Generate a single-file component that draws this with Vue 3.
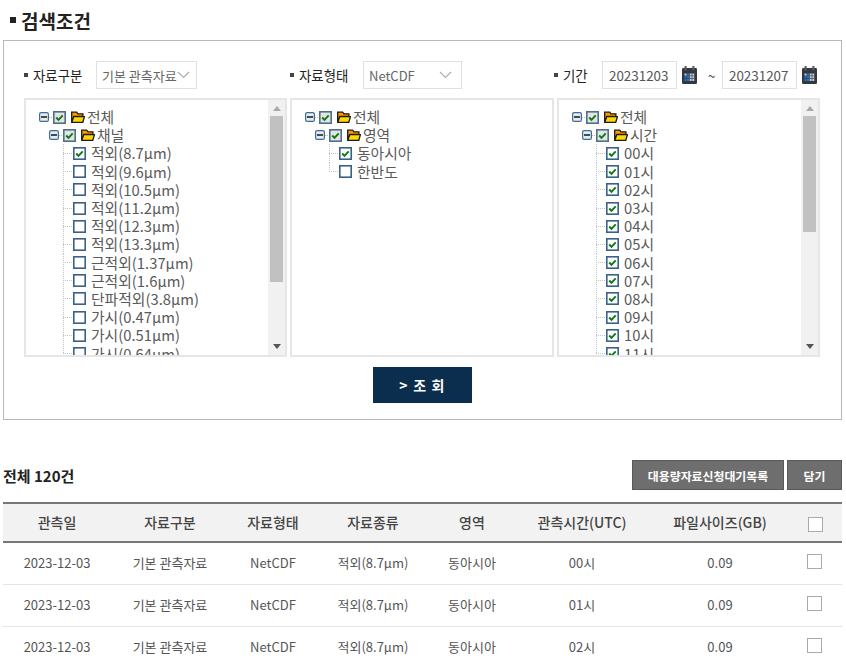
<script setup>
const channels = ['적외(8.7μm)','적외(9.6μm)','적외(10.5μm)','적외(11.2μm)','적외(12.3μm)','적외(13.3μm)','근적외(1.37μm)','근적외(1.6μm)','단파적외(3.8μm)','가시(0.47μm)','가시(0.51μm)','가시(0.64μm)']
const hours = Array.from({ length: 12 }, (_, i) => String(i).padStart(2, '0') + '시')
const panels = [
  { branch: '채널', scroll: 166, leaves: channels.map((t, i) => ({ t, on: i === 0 })) },
  { branch: '영역', scroll: 0, leaves: [{ t: '동아시아', on: true }, { t: '한반도', on: false }] },
  { branch: '시간', scroll: 116, leaves: hours.map(t => ({ t, on: true })) }
]
const columns = ['관측일','자료구분','자료형태','자료종류','영역','관측시간(UTC)','파일사이즈(GB)']
const widths = [108,118,88,112,86,134,142,51]
const rows = ['00시','01시','02시']
const calCells = []
for (let r = 0; r < 3; r++) for (let c = 0; c < 4; c++) {
  calCells.push({ x: 2.5 + c * 2.6, y: 7.5 + r * 2.7, blue: (c < 2 && r > 0) || (c === 1 && r === 0) })
}
</script>

<template>
  <div class="page">
    <h2 class="title"><i class="sq"></i>검색조건</h2>

    <section class="box">
      <div class="filters">
        <div class="field">
          <i class="dot"></i><span class="lab lab1">자료구분</span>
          <div class="select s1">기본 관측자료
            <svg class="chev" width="13" height="8" viewBox="0 0 13 8"><path d="M1 1l5.5 5.5L12 1" fill="none" stroke="#aaa" stroke-width="1.1"/></svg>
          </div>
        </div>
        <div class="field">
          <i class="dot"></i><span class="lab lab2">자료형태</span>
          <div class="select s2">NetCDF
            <svg class="chev" width="13" height="8" viewBox="0 0 13 8"><path d="M1 1l5.5 5.5L12 1" fill="none" stroke="#aaa" stroke-width="1.1"/></svg>
          </div>
        </div>
        <div class="field">
          <i class="dot"></i><span class="lab lab3">기간</span>
          <input class="date" value="20231203" />
          <svg class="cal" width="15" height="18" viewBox="0 0 15 18">
            <rect y="2" width="15" height="16" rx="1.2" fill="#33373e"/>
            <rect x="2.5" y="0" width="2.2" height="4.5" rx=".6" fill="#555a62"/><rect x="10.3" y="0" width="2.2" height="4.5" rx=".6" fill="#555a62"/>
            <rect v-for="(c, i) in calCells" :key="i" :x="c.x" :y="c.y" width="2" height="2.1" :fill="c.blue ? '#1f78e0' : '#c8ccd2'"/>
          </svg>
          <span class="tilde">~</span>
          <input class="date" value="20231207" />
          <svg class="cal" width="15" height="18" viewBox="0 0 15 18">
            <rect y="2" width="15" height="16" rx="1.2" fill="#33373e"/>
            <rect x="2.5" y="0" width="2.2" height="4.5" rx=".6" fill="#555a62"/><rect x="10.3" y="0" width="2.2" height="4.5" rx=".6" fill="#555a62"/>
            <rect v-for="(c, i) in calCells" :key="i" :x="c.x" :y="c.y" width="2" height="2.1" :fill="c.blue ? '#1f78e0' : '#c8ccd2'"/>
          </svg>
        </div>
      </div>

      <div class="panels">
        <div v-for="p in panels" :key="p.branch" class="panel">
          <div class="tree">
            <div v-for="(n, lvl) in ['전체', p.branch]" :key="n" class="row" :class="{ lvl1: lvl === 1 }">
              <svg class="tog" width="10" height="10" viewBox="0 0 10 10"><rect x=".6" y=".6" width="8.8" height="8.8" rx="1.5" fill="#e8ebee" stroke="#3a6d9a" stroke-width="1.2"/><path d="M2 5h6" stroke="#222" stroke-width="1.6"/></svg>
              <i class="hdots"></i>
              <svg class="chk" width="13" height="13" viewBox="0 0 13 13"><rect x=".8" y=".8" width="11.4" height="11.4" fill="#e4e4e4" stroke="#4f6f8d" stroke-width="1.6"/><path d="M3.2 6.5l2.3 2.4 4.2-4.6" fill="none" stroke="#0a7a12" stroke-width="1.9"/></svg>
              <svg class="fold" width="14" height="12" viewBox="0 0 14 12"><path d="M.7 10.8V1.2h5l1.2 1.6h5v2.6H3z" fill="#ff9800" stroke="#1a1a1a" stroke-width="1.3"/><path d="M.8 11.3l1.9-5.6h10.7l-1.6 5.6z" fill="#ffd800" stroke="#1a1a1a" stroke-width="1.3"/></svg>
              <span>{{ n }}</span>
            </div>
            <div v-for="(l, i) in p.leaves" :key="l.t" class="row leaf">
              <i class="conn" :class="{ last: i === p.leaves.length - 1 }"></i>
              <svg class="chk" width="13" height="13" viewBox="0 0 13 13"><rect x=".8" y=".8" width="11.4" height="11.4" fill="#fff" stroke="#3a6288" stroke-width="1.6"/><path v-if="l.on" d="M3.2 6.5l2.3 2.4 4.2-4.6" fill="none" stroke="#0a7a12" stroke-width="1.9"/></svg>
              <span class="leaftext">{{ l.t }}</span>
            </div>
          </div>
          <div v-if="p.scroll" class="bar">
            <i class="arr up"></i>
            <div class="thumb" :style="{ height: p.scroll + 'px' }"></div>
            <i class="arr down"></i>
          </div>
        </div>
      </div>

      <div class="actions"><button class="search">&gt; 조 회</button></div>
    </section>

    <div class="toolbar">
      <strong class="total">전체 120건</strong>
      <div class="btns">
        <button class="gray wide">대용량자료신청대기목록</button>
        <button class="gray">담기</button>
      </div>
    </div>

    <table>
      <colgroup><col v-for="(w, i) in widths" :key="i" :style="{ width: w + 'px' }" /></colgroup>
      <thead>
        <tr>
          <th v-for="c in columns" :key="c">{{ c }}</th>
          <th><i class="tick"></i></th>
        </tr>
      </thead>
      <tbody>
        <tr v-for="h in rows" :key="h">
          <td>2023-12-03</td><td>기본 관측자료</td><td>NetCDF</td><td>적외(8.7μm)</td><td>동아시아</td><td>{{ h }}</td><td>0.09</td>
          <td><i class="tick"></i></td>
        </tr>
      </tbody>
    </table>
  </div>
</template>

<style>
html, body { margin: 0; background: #fff; overflow: hidden; }
</style>

<style scoped>
.page {
  width: 839px; height: 666px; padding-left: 3px; overflow: hidden;
  font-family: "Noto Sans CJK KR", "Noto Sans", sans-serif; color: #333;
}
.title {
  height: 40px; margin: 0; padding-left: 7px; box-sizing: border-box;
  display: flex; align-items: center; gap: 5px;
  font-size: 19px; font-weight: 700; color: #222; line-height: 1;
}
.sq { width: 6px; height: 6px; background: #222; }
.box { height: 380px; box-sizing: border-box; border: 1px solid #b8b8b8; padding: 20px 0 0 20px; }
.filters { display: grid; grid-template-columns: 266px 264px 1fr; height: 28px; }
.field { display: flex; align-items: center; }
.dot { width: 4px; height: 4px; background: #444; margin-right: 5px; flex: none; }
.lab { font-size: 13.4px; color: #222; flex: none; }
.lab1 { width: 63px; }
.lab2 { width: 64px; }
.lab3 { width: 39px; }
.select {
  height: 28px; box-sizing: border-box; border: 1px solid #e0e0e0;
  display: flex; align-items: center; justify-content: space-between;
  font-size: 13px; color: #666; padding: 0 6px 0 5px; flex: none;
}
.s1 { width: 101px; }
.s2 { width: 99px; padding-right: 9px; }
.date {
  width: 75px; height: 28px; box-sizing: border-box; border: 1px solid #e0e0e0; padding: 0 0 0 6px; margin: 0;
  font: 13.4px "Noto Sans CJK KR", "Noto Sans", sans-serif; color: #555; outline: none;
}
.cal { margin-left: 5px; flex: none; }
.tilde { width: 25px; box-sizing: border-box; padding-left: 4px; text-align: center; font-size: 13px; color: #444; }
.panels { display: grid; grid-template-columns: 263px 264px 263px; gap: 3px; margin-top: 9px; height: 259px; }
.panel { display: flex; border: 2px solid #e6e6e6; box-sizing: border-box; overflow: hidden; min-width: 0; }
.tree { flex: 1; padding: 8px 0 0 13px; overflow: hidden; font-size: 14.8px; color: #5a5a5a; }
.row { display: flex; align-items: center; height: 18.2px; line-height: 18px; white-space: nowrap; }
.lvl1 { margin-left: 10px; }
.leaf { margin-left: 24px; }
.tog { flex: none; }
.hdots { width: 4px; height: 1px; background: repeating-linear-gradient(to right, #bbb 0 1px, transparent 1px 2px); }
.chk { flex: none; }
.fold { flex: none; margin: 0 2px 0 5px; }
.conn {
  align-self: stretch; width: 10px; flex: none;
  background:
    repeating-linear-gradient(to bottom, #c4c4c4 0 1px, transparent 1px 2px) left top / 1px 100% no-repeat,
    repeating-linear-gradient(to right, #c4c4c4 0 1px, transparent 1px 2px) left center / 100% 1px no-repeat;
}
.conn.last {
  background:
    repeating-linear-gradient(to bottom, #c4c4c4 0 1px, transparent 1px 2px) left top / 1px 50% no-repeat,
    repeating-linear-gradient(to right, #c4c4c4 0 1px, transparent 1px 2px) left center / 100% 1px no-repeat;
}
.leaftext { margin-left: 5px; }
.bar { width: 15px; flex: none; background: #f1f1f1; display: flex; flex-direction: column; align-items: center; padding: 0 1px; }
.thumb { width: 13px; background: #c1c1c1; }
.arr { width: 0; height: 0; border: 4px solid transparent; flex: none; }
.arr.up { border-bottom: 5px solid #a8a8a8; border-top: 0; margin: 6px 0 5px; }
.arr.down { border-top: 5px solid #555; border-bottom: 0; margin-top: auto; margin-bottom: 6px; }
.actions { display: flex; justify-content: center; margin-top: 10px; padding-right: 20px; }
.search {
  width: 99px; height: 36px; border: 0; background: #0b2e4f; color: #fff; padding: 0;
  font: 700 14px "Noto Sans CJK KR", "Noto Sans", sans-serif; letter-spacing: 1.2px;
}
.toolbar { display: flex; justify-content: space-between; align-items: center; margin-top: 40px; height: 30px; }
.total { font-size: 15px; font-weight: 700; color: #222; }
.btns { display: flex; gap: 3px; }
.gray {
  width: 55px; height: 30px; padding: 0; background: #6e6e6e; border: 1px solid #5a5a5a; color: #fff;
  font: 700 11.9px "Noto Sans CJK KR", "Noto Sans", sans-serif;
}
.gray.wide { width: 152px; }
table { border-collapse: collapse; table-layout: fixed; width: 839px; margin-top: 12px; }
th {
  height: 36px; padding: 0 0 1px; background: #f2f2f2; border-top: 2px solid #777; border-bottom: 2px solid #777;
  font-size: 14px; font-weight: 500; color: #444; text-align: center;
}
td { height: 38px; padding: 0 0 3px; border-bottom: 1px solid #e4e4e4; font-size: 13px; color: #555; text-align: center; }
.tick { display: inline-block; width: 13px; height: 13px; border: 1px solid #aaa; background: #fff; vertical-align: middle; position: relative; left: -1px; }
td .tick { top: -2px; left: -2px; }
</style>
